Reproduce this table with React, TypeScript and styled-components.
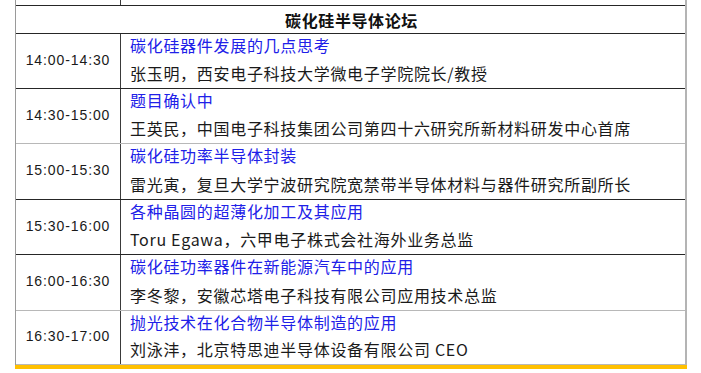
import { FC } from "react";
import styled, { createGlobalStyle } from "styled-components";

const Global = createGlobalStyle`
  html, body {
    margin: 0;
    padding: 0;
    background: #fff;
  }
  body {
    font-family: "Noto Sans CJK SC", "Noto Sans", sans-serif;
    color: #1a1a1a;
  }
`;

type Session = {
  time: string;
  topic: string;
  speaker: string;
  h: number;
  line: "dark" | "light";
};

const sessions: Session[] = [
  {
    time: "14:00-14:30",
    topic: "碳化硅器件发展的几点思考",
    speaker: "张玉明，西安电子科技大学微电子学院院长/教授",
    h: 55,
    line: "dark",
  },
  {
    time: "14:30-15:00",
    topic: "题目确认中",
    speaker: "王英民，中国电子科技集团公司第四十六研究所新材料研发中心首席",
    h: 55,
    line: "light",
  },
  {
    time: "15:00-15:30",
    topic: "碳化硅功率半导体封装",
    speaker: "雷光寅，复旦大学宁波研究院宽禁带半导体材料与器件研究所副所长",
    h: 56,
    line: "dark",
  },
  {
    time: "15:30-16:00",
    topic: "各种晶圆的超薄化加工及其应用",
    speaker: "Toru Egawa，六甲电子株式会社海外业务总监",
    h: 55,
    line: "dark",
  },
  {
    time: "16:00-16:30",
    topic: "碳化硅功率器件在新能源汽车中的应用",
    speaker: "李冬黎，安徽芯塔电子科技有限公司应用技术总监",
    h: 56,
    line: "light",
  },
  {
    time: "16:30-17:00",
    topic: "抛光技术在化合物半导体制造的应用",
    speaker: "刘泳沣，北京特思迪半导体设备有限公司 CEO",
    h: 54,
    line: "light",
  },
];

const Page = styled.div`
  width: 701px;
  height: 373px;
  overflow: hidden;
  padding-left: 15px;
  box-sizing: border-box;
`;

const Sheet = styled.div`
  width: 672px;
  box-sizing: border-box;
  border-left: 1px solid #9a9a9a;
  border-right: 2px solid #b4b4b4;
`;

const Row = styled.div<{ $h: number; $line: "dark" | "light" }>`
  display: grid;
  grid-template-columns: 105px 1fr;
  height: ${(p) => p.$h}px;
  box-sizing: border-box;
  border-bottom: 1px solid ${(p) => (p.$line === "dark" ? "#262626" : "#b8b8b8")};
`;

const TimeCell = styled.div`
  border-right: 1px solid #3a3a3a;
  display: flex;
  align-items: center;
  justify-content: center;
  padding-bottom: 3px;
  font-family: "Liberation Sans", Arial, sans-serif;
  font-size: 14px;
  letter-spacing: 0.9px;
  color: #1a1a1a;
`;

const InfoCell = styled.div`
  display: flex;
  flex-direction: column;
  justify-content: space-between;
  padding: 0 0 4px 9px;
  font-size: 16px;
  line-height: 22px;
  letter-spacing: 0.7px;
  white-space: nowrap;
`;

const Topic = styled.div`
  color: #2020e8;
`;

const Speaker = styled.div`
  color: #1a1a1a;
`;

const TitleRow = styled.div`
  height: 28px;
  box-sizing: border-box;
  border-bottom: 1px solid #262626;
  display: flex;
  align-items: center;
  justify-content: center;
  padding-left: 2px;
  font-size: 16px;
  font-weight: 700;
  letter-spacing: 0.6px;
  color: #111;
`;

const Gold = styled.div`
  width: 672px;
  height: 4px;
  background: #ffc000;
`;

const App: FC = () => {
  return (
    <Page>
      <Global />
      <Sheet>
        <Row $h={6} $line="dark">
          <TimeCell />
          <div />
        </Row>
        <TitleRow>碳化硅半导体论坛</TitleRow>
        {sessions.map((s) => (
          <Row key={s.time} $h={s.h} $line={s.line}>
            <TimeCell>{s.time}</TimeCell>
            <InfoCell>
              <Topic>{s.topic}</Topic>
              <Speaker>{s.speaker}</Speaker>
            </InfoCell>
          </Row>
        ))}
      </Sheet>
      <Gold />
    </Page>
  );
};

export default App;
